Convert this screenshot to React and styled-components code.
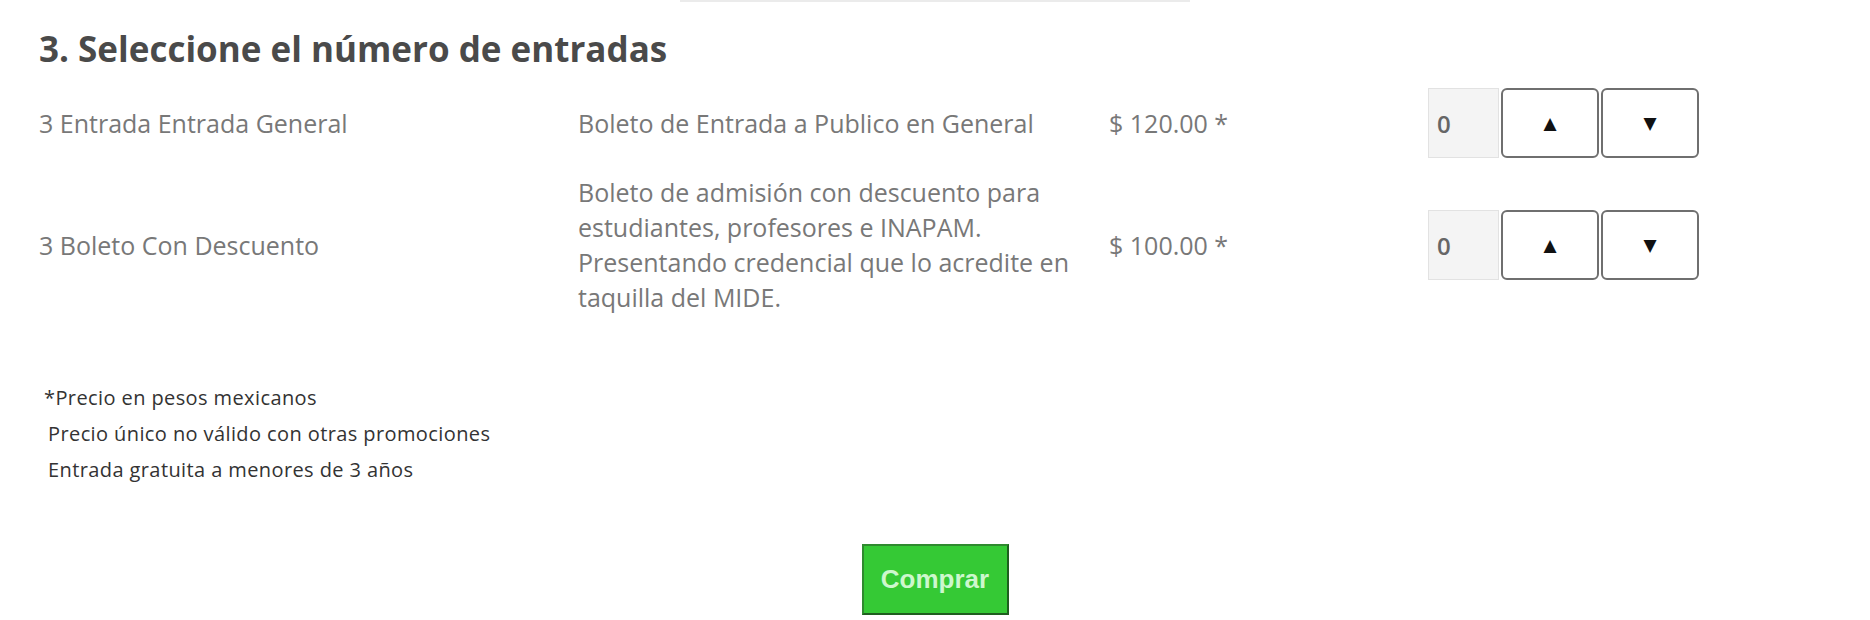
import React from "react";
import styled, { createGlobalStyle } from "styled-components";

const GlobalStyle = createGlobalStyle`
  html, body { margin: 0; padding: 0; background: #ffffff; }
  body { font-family: "Open Sans", "Noto Sans", Arial, sans-serif; }
`;

const Page = styled.div`
  width: 1870px;
  height: 620px;
  overflow: hidden;
  background: #ffffff;
`;

const TopRule = styled.div`
  width: 510px;
  height: 2px;
  margin: 0 auto;
  background: #ebebeb;
`;

const Title = styled.h2`
  margin: 25px 0 0 39px;
  font-size: 35px;
  line-height: 44px;
  font-weight: 700;
  color: #4a4a4a;
`;

const TicketGrid = styled.div`
  display: grid;
  grid-template-columns: 539px 531px 319px auto;
  row-gap: 17px;
  align-items: center;
  margin: 17px 0 0 39px;
  font-size: 25px;
  color: #787878;
`;

const Cell = styled.div`
  line-height: 35px;
`;

const Description = styled(Cell)`
  max-width: 496px;
`;

const Controls = styled.div`
  display: flex;
  align-items: stretch;
  height: 70px;
`;

const Qty = styled.div`
  width: 71px;
  box-sizing: border-box;
  background: #f4f4f4;
  border: 1px solid #e2e2e2;
  display: flex;
  align-items: center;
  padding-left: 8px;
  font-size: 24px;
  font-weight: 600;
  color: #666666;
`;

const StepButton = styled.button`
  width: 98px;
  margin-left: 2px;
  box-sizing: border-box;
  background: #ffffff;
  border: 2px solid #6f6f6f;
  border-radius: 6px;
  display: flex;
  align-items: center;
  justify-content: center;
  font-size: 17px;
  color: #111;
  padding: 0;
  font-family: "DejaVu Sans", sans-serif;
`;

const Notes = styled.div`
  margin: 65px 0 0 44px;
  font-size: 20px;
  letter-spacing: 0.4px;
  line-height: 36px;
  color: #333333;
`;

const Note = styled.div`
  padding-left: ${(p) => (p.$indent ? "4px" : "0")};
`;

const ButtonRow = styled.div`
  display: flex;
  justify-content: center;
  margin-top: 56px;
`;

const BuyButton = styled.button`
  width: 147px;
  height: 71px;
  box-sizing: border-box;
  background: #35c935;
  border: 2px solid #1f5e1f;
  border-top-color: #2f8a2f;
  border-left-color: #2f8a2f;
  color: #cdf7cd;
  font-family: "Liberation Sans", Arial, sans-serif;
  font-weight: 700;
  font-size: 26px;
  padding: 0;
`;

const tickets = [
  {
    name: "3 Entrada Entrada General",
    desc: "Boleto de Entrada a Publico en General",
    price: "$ 120.00 *",
  },
  {
    name: "3 Boleto Con Descuento",
    desc: "Boleto de admisión con descuento para estudiantes, profesores e INAPAM. Presentando credencial que lo acredite en taquilla del MIDE.",
    price: "$ 100.00 *",
  },
];

export default function App() {
  return (
    <Page>
      <GlobalStyle />
      <TopRule />
      <Title>3. Seleccione el número de entradas</Title>
      <TicketGrid>
        {tickets.map((t) => (
          <React.Fragment key={t.name}>
            <Cell>{t.name}</Cell>
            <Description>{t.desc}</Description>
            <Cell>{t.price}</Cell>
            <Controls>
              <Qty>0</Qty>
              <StepButton>▲</StepButton>
              <StepButton>▼</StepButton>
            </Controls>
          </React.Fragment>
        ))}
      </TicketGrid>
      <Notes>
        <Note>*Precio en pesos mexicanos</Note>
        <Note $indent>Precio único no válido con otras promociones</Note>
        <Note $indent>Entrada gratuita a menores de 3 años</Note>
      </Notes>
      <ButtonRow>
        <BuyButton>Comprar</BuyButton>
      </ButtonRow>
    </Page>
  );
}
